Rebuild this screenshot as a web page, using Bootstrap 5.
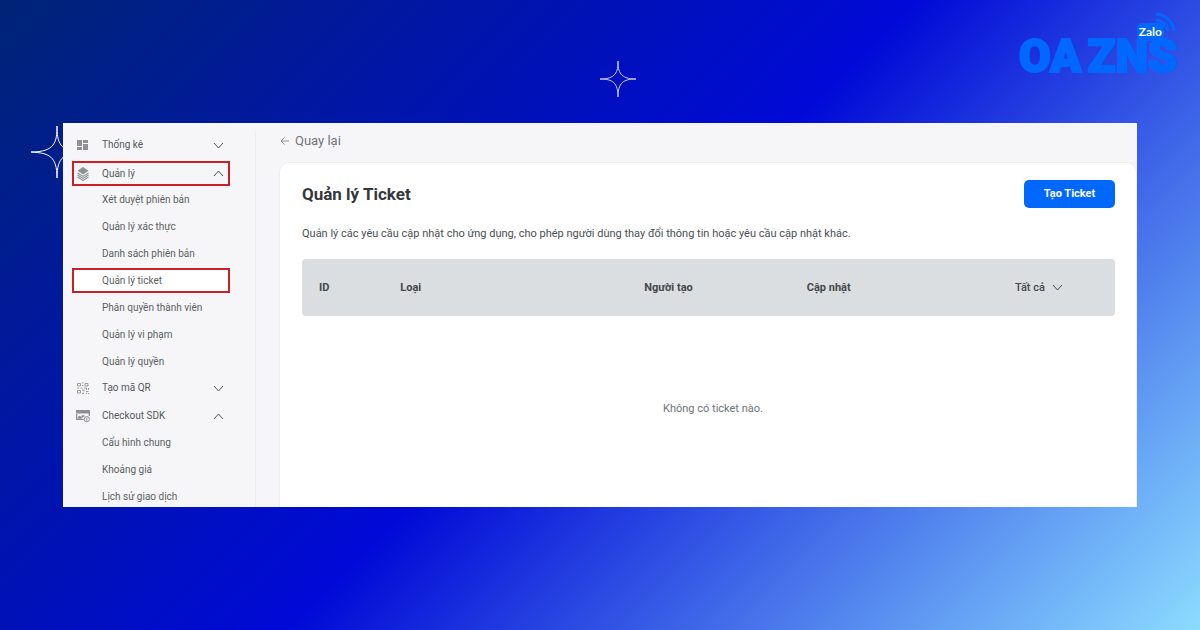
<!DOCTYPE html>
<html lang="vi">
<head>
<meta charset="utf-8">
<meta name="viewport" content="width=device-width, initial-scale=1">
<title>Quản lý Ticket</title>
<link href="https://cdn.jsdelivr.net/npm/bootstrap@5.3.0/dist/css/bootstrap.min.css" rel="stylesheet">
<style>
  body { font-family: Roboto, "Noto Sans", sans-serif; font-size: 11px; line-height: 16px; color: #4a4f54; }
  .stage { background: linear-gradient(135deg, #002475 0%, #0009d6 50%, #8cdcff 100%); padding: 0 63px 123px; }
  .masthead { height: 123px; flex: none; }
  .sparkle { position: absolute; fill: none; stroke: #fff; stroke-width: 1; }
  .sparkle-top { left: 50%; top: 61px; opacity: .8; }
  .sparkle-side { left: -32px; top: 3px; z-index: -1; }
  .brand { margin-right: -40px; margin-top: 31px; width: 158px; height: 50px; color: #0068ff; font: 900 46px/50px Roboto, sans-serif; -webkit-text-stroke: 2px #0068ff; }
  .brand-tag { position: absolute; right: 13px; top: -8px; padding: 0 2px; border-radius: 5px; background: #0068ff; color: #fff; font: 700 12px/18px Lato, sans-serif; -webkit-text-stroke: 0; }
  .brand-waves { position: absolute; right: 1px; top: -19px; fill: none; stroke: #0068ff; stroke-width: 3; }
  .shell { z-index: 0; min-height: 0; }
  .shell-body { background: #f6f6f8; overflow: hidden; }
  .side { width: 193px; flex: none; margin-top: 8px; padding: 0 25px 0 9px; border-right: 1px solid #ededf0; }
  .side-head { height: 28px; width: 100%; padding: 0 6px 0 4px; border: 0; background: none; color: #55595d; gap: 12px; font-size: 10px; }
  .side-head svg:first-child { width: 14px; height: 14px; flex: none; }
  .side ul { margin: -1px 0; }
  .side li { padding: 1px 0; }
  .side a { display: flex; align-items: center; height: 25px; padding-left: 30px; color: #5b5f63; text-decoration: none; font-size: 10px; }
  .side .marked { outline: 2px solid #cb1f27; outline-offset: -2px; }
  .side-head.marked { height: 25px; margin: 2px 0 1px; }
  .side a.marked { background: #fff; }
  .chev { width: 11px; height: 7px; fill: none; stroke: #55595d; stroke-width: 1; }
  .back { height: 39px; flex: none; padding: 0 0 3px; margin-left: 24px; gap: 6px; color: #6f7479; font-size: 13px; text-decoration: none; }
  .pane { margin-left: 23px; padding: 17px 21px 0 22px; background: #fff; border: 1px solid #eeeff1; border-width: 1px 1px 0; border-radius: 10px 10px 0 0; }
  .pane h1 { font-size: 17px; line-height: 28px; font-weight: 700; color: #34383c; }
  .pane p { margin: 18px 0 17px; }
  .btn-new { width: 91px; height: 28px; padding: 0; border: 0; border-radius: 5px; background: #0068ff; color: #fff; font-size: 11px; font-weight: 700; }
  .tickets { table-layout: fixed; border-collapse: separate; border-spacing: 0; }
  .tickets th { height: 57px; padding: 0 0 0 17px; background: #dbdee1; font-weight: 700; color: #44484c; vertical-align: middle; }
  .tickets th:first-child { border-radius: 4px 0 0 4px; }
  .tickets th:last-child { border-radius: 0 4px 4px 0; }
  .tickets .none { height: 186px; padding-left: 10px; color: #6f7479; }
  .pick { width: 48px; padding: 0; border: 0; appearance: none; color: #44484c; font-size: 11px; font-weight: 500; background: url("data:image/svg+xml,%3Csvg xmlns='http://www.w3.org/2000/svg' width='11' height='7' fill='none' stroke='%2344484c'%3E%3Cpath d='M1 1l4.500 5L10 1'/%3E%3C/svg%3E") no-repeat right center; }
</style>
</head>
<body>
<div class="stage position-relative vh-100 d-flex flex-column">
  <svg class="sparkle sparkle-top" width="36" height="36" viewBox="0 0 36 36" aria-hidden="true"><path d="M18 0C18 11 16 18 0 18C13 18 18 22 18 36C18 22 23 18 36 18C20 18 18 11 18 0Z"/></svg>
  <header class="masthead d-flex justify-content-end">
    <div class="brand position-relative d-flex justify-content-between">
      <span>OA</span><span>ZNS</span>
      <svg class="brand-waves" width="22" height="22" viewBox="0 0 22 22" aria-hidden="true"><path d="M2 2A19 19 0 0 1 20 19M2 8A13 13 0 0 1 14 19"/></svg>
      <span class="brand-tag">Zalo</span>
    </div>
  </header>
  <div class="shell position-relative flex-grow-1 d-flex">
    <svg class="sparkle sparkle-side" width="52" height="52" viewBox="0 0 52 52" aria-hidden="true"><path d="M26 0C26 16 24 26 0 26C18 27 26 30 26 52C26 30 34 27 52 26C28 26 26 16 26 0Z"/></svg>
    <div class="shell-body flex-grow-1 d-flex">
      <nav class="side">
        <button type="button" class="side-head d-flex align-items-center">
          <svg viewBox="0 0 14 14" fill="#8d9194"><path d="M1 2h5v6H1zM1 9h5v3H1zM7 2h5v3H7zM7 6h5v6H7z"/></svg>
          <span class="me-auto">Thống kê</span>
          <svg class="chev"><path d="M1 1l4.500 5L10 1"/></svg>
        </button>
        <button type="button" class="side-head marked d-flex align-items-center">
          <svg viewBox="0 0 14 14" fill="#8d9194"><path d="M7 0l5.500 3.700L7 7.400 1.500 3.700z"/><path d="M1.500 6L7 9.400 12.500 6M1.500 8L7 11.400 12.500 8M1.500 10L7 13.400l5.500-3.400" fill="none" stroke="#8d9194" stroke-width="1.100"/></svg>
          <span class="me-auto">Quản lý</span>
          <svg class="chev"><path d="M1 6l4.500-5L10 6"/></svg>
        </button>
        <ul class="list-unstyled">
          <li><a href="#">Xét duyệt phiên bản</a></li>
          <li><a href="#">Quản lý xác thực</a></li>
          <li><a href="#">Danh sách phiên bản</a></li>
          <li><a href="#" class="marked">Quản lý ticket</a></li>
          <li><a href="#">Phân quyền thành viên</a></li>
          <li><a href="#">Quản lý vi phạm</a></li>
          <li><a href="#">Quản lý quyền</a></li>
        </ul>
        <button type="button" class="side-head d-flex align-items-center">
          <svg viewBox="0 0 14 14" fill="none" stroke="#9a9da0"><path d="M1.500 2.500h3v2.500h-3zM9 2.500h3v2.500H9zM1.500 9.500h3V12h-3zM6 2h1.500M6 4.500h1.500M1 7.200h2M4.500 7.200h2M8 7h2.500v2M12.500 7v2M6 9h2v1.500M10 10.500h2.500M6 12.300h2M10 12.500h1M12 12.500h1"/></svg>
          <span class="me-auto">Tạo mã QR</span>
          <svg class="chev"><path d="M1 1l4.500 5L10 1"/></svg>
        </button>
        <button type="button" class="side-head d-flex align-items-center">
          <svg viewBox="0 0 14 14"><path d="M0 1h14v3.500H0z" fill="#8d9194"/><path d="M.7 5v5.300h7M13.300 4v3M2 7.800h3v1H2M6.500 8.500V7h2" fill="none" stroke="#8d9194" stroke-width="1.300"/><circle cx="10.800" cy="10.200" r="2.600" fill="#f6f6f8" stroke="#8d9194"/><path d="M10.800 8.700v3" stroke="#8d9194"/></svg>
          <span class="me-auto">Checkout SDK</span>
          <svg class="chev"><path d="M1 6l4.500-5L10 6"/></svg>
        </button>
        <ul class="list-unstyled">
          <li><a href="#">Cấu hình chung</a></li>
          <li><a href="#">Khoảng giá</a></li>
          <li><a href="#">Lịch sử giao dịch</a></li>
        </ul>
      </nav>
      <main class="flex-grow-1 d-flex flex-column">
        <a href="#" class="back d-flex align-items-center align-self-start">
          <svg width="9" height="8" fill="none" stroke="#8d9194" aria-hidden="true"><path d="M9 4H1M4.500 .5L1 4l3.500 3.500"/></svg>Quay lại
        </a>
        <section class="pane flex-grow-1">
          <div class="d-flex justify-content-between align-items-center">
            <h1 class="m-0">Quản lý Ticket</h1>
            <button type="button" class="btn-new">Tạo Ticket</button>
          </div>
          <p>Quản lý các yêu cầu cập nhật cho ứng dụng, cho phép người dùng thay đổi thông tin hoặc yêu cầu cập nhật khác.</p>
          <table class="tickets w-100">
            <colgroup><col style="width:10%"><col style="width:30%"><col style="width:20%"><col style="width:25.6%"><col></colgroup>
            <thead>
              <tr><th>ID</th><th>Loại</th><th>Người tạo</th><th>Cập nhật</th>
              <th><select class="pick" aria-label="Trạng thái"><option>Tất cả</option></select></th></tr>
            </thead>
            <tbody><tr><td colspan="5" class="none text-center">Không có ticket nào.</td></tr></tbody>
          </table>
        </section>
      </main>
    </div>
  </div>
</div>
<script src="https://cdn.jsdelivr.net/npm/bootstrap@5.3.0/dist/js/bootstrap.bundle.min.js"></script>
</body>
</html>
